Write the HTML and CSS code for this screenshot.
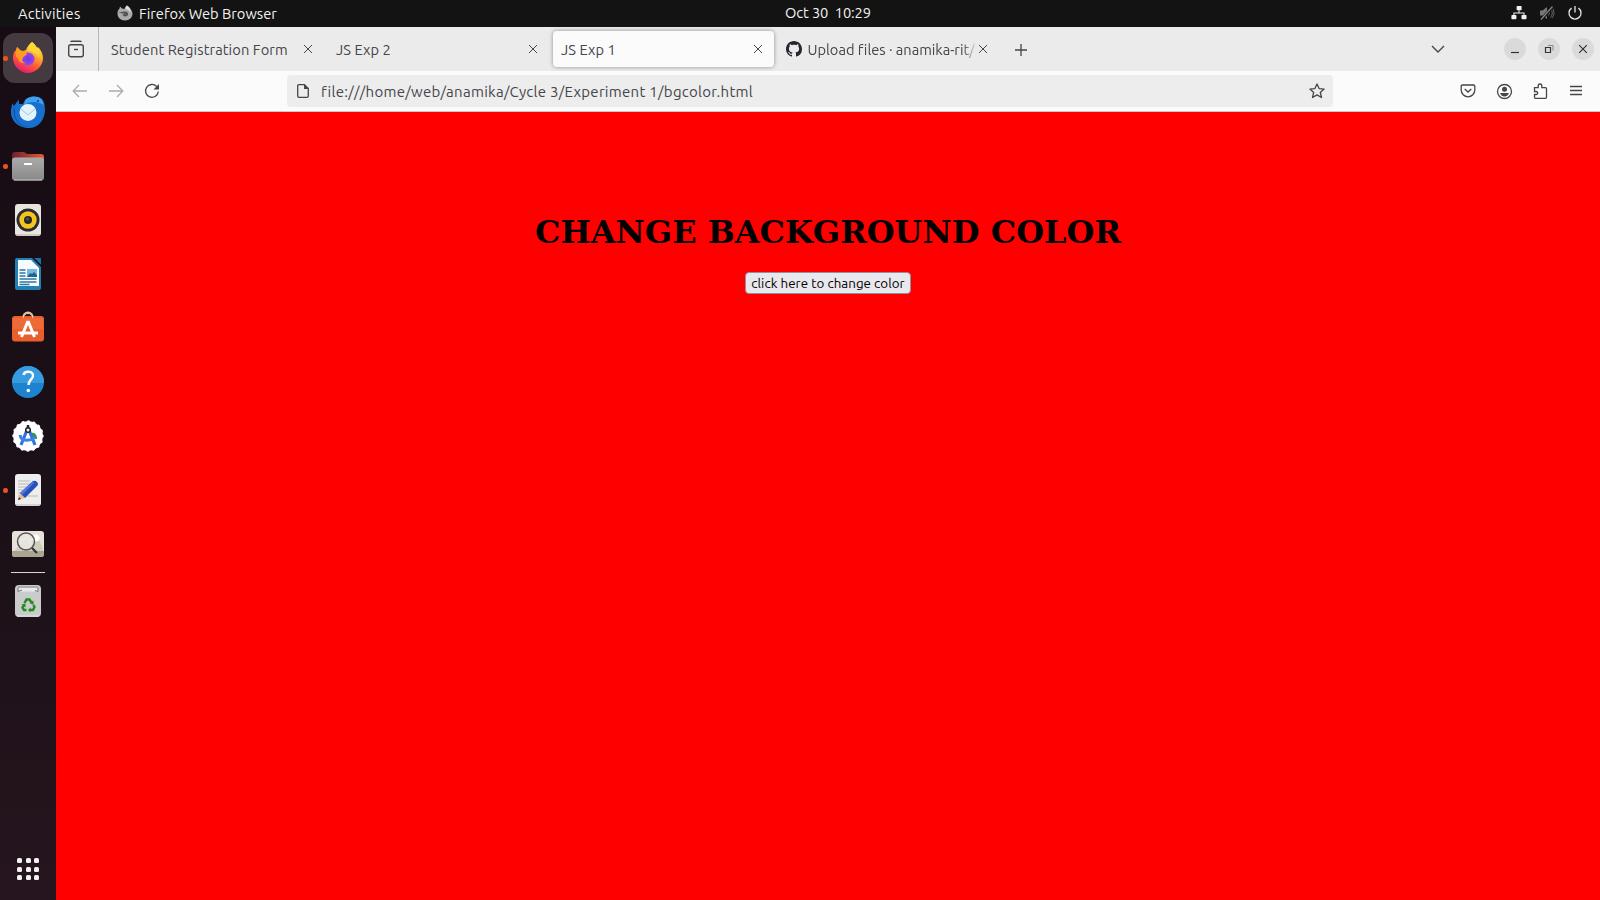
FILE: index.html
```html
<!DOCTYPE html>
<html lang="en">
<head>
<meta charset="utf-8">
<title>JS Exp 1</title>
<link rel="stylesheet" href="styles.css">
</head>
<body>
<header class="topbar">
  <span class="activities">Activities</span>
  <svg class="app-icon" width="16" height="16" viewBox="0 0 32 32"><path fill="#aaa" d="M20 1c6 4 10 9 11 16 0 8-6 14-15 14S1 25 1 17c0-4 1-7 4-10l1-4 4 4 5 1c1-3 2-5 5-7z"/><path fill="#555" d="M3 14c5 1 9-1 13-1 5 0 7 3 6 7-2 4-9 4-12-1 2 1 4 0 4-2-4 0-7-1-11-3z"/><path fill="#ddd" d="M20 1c5 4 8 8 7 15-2-5-5-7-10-8 0-3 1-5 3-7z"/></svg>
  <span class="app-name">Firefox Web Browser</span>
  <span class="clock">Oct 30&nbsp; 10:29</span>
  <div class="status">
    <svg width="16" height="16" viewBox="0 0 16 16" fill="#f2f2f2"><rect x="5.6" y="1" width="5" height="4.3" rx=".7"/><rect x=".4" y="10" width="5" height="4.3" rx=".7"/><rect x="10.5" y="10" width="5" height="4.3" rx=".7"/><path d="M7.500 5h1v2.500h5V10h-1V8.500H3.400V10h-1V7.500h5.100z"/></svg>
    <svg width="16" height="16" viewBox="0 0 16 16"><path fill="#777" d="M1 5.500h2.500L8 2v12L3.500 10.500H1z"/><path d="M9.500 5.500q2 2.500 0 5M11.500 3.500q3.500 4.500 0 9M13 2q4 6 0 11" fill="none" stroke="#666"/><path d="M1.500 15.500 14 1.500" stroke="#131313" stroke-width="3"/><path d="M2 14.500 13.500 1.500" stroke="#888" stroke-width="1.200"/></svg>
    <svg width="16" height="16" viewBox="0 0 16 16" fill="none" stroke="#e8e8e8" stroke-width="1.300"><path d="M4.600 3.100a6 6 0 1 0 6.800 0M8 1v6.500"/></svg>
  </div>
</header>
<div class="desktop">
  <nav class="dock">
    <div class="launcher active running"><svg width="36" height="36" viewBox="0 0 36 36"><defs><linearGradient id="fx" x1=".8" y1="0" x2=".3" y2="1"><stop offset="0" stop-color="#fff14a"/><stop offset=".35" stop-color="#ffb32c"/><stop offset=".65" stop-color="#ff5a36"/><stop offset="1" stop-color="#e31578"/></linearGradient><radialGradient id="fxp"><stop offset="0" stop-color="#6a3be0"/><stop offset="1" stop-color="#9a45ec"/></radialGradient></defs><path fill="url(#fx)" d="M22 2c2 1.500 4 4 5 6l1-1c3 3 5 7 5 11 0 8-7 15-15 15S3 26 3 18c0-4 1-6 3-8l1-3 3 3 3 1 3-1c1-3 3-6 6-8z"/><circle cx="18" cy="19" r="6.500" fill="url(#fxp)"/><path fill="#ff9a22" d="M6 12l1-5 4 4 3 0 3 3c-1 2-4 2-4 4-2 2 0 5 3 5-5 1-8-2-8-5l-2-1z"/><path fill="#ffd836" d="M22 2c5 4 8 9 7 16-1-3-2-5-5-5-2-2-4-2-6-2 0-4 1-6 4-9z"/></svg></div>
    <div class="launcher"><svg width="36" height="36" viewBox="0 0 36 36"><path fill="#1670cc" d="M2 11q0-3 2 1l5-7v5h4C15 4 22 1 29 3c5 2 6 7 6 14C34 27 28 34 19 34 9 34 0 27 1 16z"/><path fill="#180d15" d="M8 2h7l-2 7H9z"/><path fill="#3fa0ef" d="M15 6c4-4 12-5 17 0l2 5c-7-4-14-4-20 0z"/><path fill="#0c51ab" d="M5 17c-1 8 5 15 14 16C9 33 2 25 4 12z"/><circle cx="18" cy="18.500" r="8.500" fill="#e4f2fc"/><path d="m11 15 7 6 7-6" fill="none" stroke="#a5c4dd"/><circle cx="28" cy="7" r="1" fill="#123b79"/></svg></div>
    <div class="launcher running low"><svg width="36" height="36" viewBox="0 0 36 36"><defs><linearGradient id="fd"><stop stop-color="#6d2034"/><stop offset="1" stop-color="#e25c31"/></linearGradient><linearGradient id="fg" x2="0" y2="1"><stop stop-color="#aaa"/><stop offset="1" stop-color="#898989"/></linearGradient></defs><path fill="url(#fd)" d="M2 6q0-3 3-3h9l3 2h14q3 0 3 3v9H2z"/><rect x="2" y="8.500" width="32" height="23" rx="3" fill="url(#fg)"/><path d="M4 31h28" stroke="#c5c5c5"/><rect x="14" y="14" width="8" height="2" rx=".5" fill="#fff"/></svg></div>
    <div class="launcher"><svg width="36" height="36" viewBox="0 0 36 36"><rect x="5" y="2" width="26" height="32" rx="3" fill="#e9e4de"/><path d="M6 33h24" stroke="#b7aea4"/><circle cx="18" cy="18" r="11.500" fill="#272b32"/><circle cx="18" cy="18" r="8.700" fill="#f5c51d"/><circle cx="18" cy="18" r="4" fill="#25292e"/><circle cx="17.500" cy="17" r="1.500" fill="#555"/></svg></div>
    <div class="launcher"><svg width="36" height="36" viewBox="0 0 36 36"><path fill="#2380b5" d="M7 2h16l8 8v22q0 2-2 2H7q-2 0-2-2V4q0-2 2-2z"/><path fill="#f8fbfd" d="M8 4h13l8 8v18H8z"/><path fill="#1571a8" d="M24 2h7v7z"/><path fill="#180d15" d="m22 2 9 9V9l-7-7z"/><path d="M9.500 14h6M9.500 17h6M9.500 20h6M9.500 23h17M9.500 26h17M9.500 28.500h10" stroke="#2a78a6" stroke-width="1.300"/><path fill="#75b8dd" d="M17 13h10v8H17z"/><path fill="#1b668f" d="m17 21 3-4 2 1 2-2 3 3v2z"/></svg></div>
    <div class="launcher high"><svg width="36" height="36" viewBox="0 0 36 36"><path d="M13 10C12 1 24 1 23 10" fill="none" stroke="#e7c4a8" stroke-width="1.600"/><path fill="#e85e2c" d="M5 7h26q3 0 3 3v19.500q0 3-3 3H5q-3 0-3-3V10q0-3 3-3z"/><path fill="#f17744" d="M3 9h30v11H3z" opacity=".5"/><path d="m18 12-6.500 16M18 12l6.500 16" fill="none" stroke="#fff" stroke-width="3"/><path d="M8 24h20" stroke="#fff" stroke-width="3"/><path d="M13 9C14 3 22 3 23 9" fill="none" stroke="#f7dbc5"/></svg></div>
    <div class="launcher"><svg width="36" height="36" viewBox="0 0 36 36"><circle cx="18" cy="18" r="16" fill="#1d83d0"/><path d="M2 18a16 16 0 0 1 32 0v1H2z" fill="#379be0"/><path d="M13.500 11c1-4.500 10-4.500 9.500 1 0 3-4.500 3.500-4.500 9" fill="none" stroke="#fff" stroke-width="2.400"/><circle cx="18.300" cy="26.500" r="1.800" fill="#fff"/></svg></div>
    <div class="launcher"><svg width="36" height="36" viewBox="0 0 36 36"><circle cx="18" cy="18" r="14.800" fill="#fff"/><circle cx="18" cy="18" r="14" fill="none" stroke="#fff" stroke-width="3.500" stroke-linecap="round" stroke-dasharray=".1 5.398"/><path fill="#329650" d="M21 15c4-1 6 2 6 6h-6z"/><path d="m17 12-6 15M19 12l6 15" stroke="#3273dc" stroke-width="3.200"/><path d="M10 17q1 6 8 5 5 0 7-3" fill="none" stroke="#3d83ea" stroke-width="3"/><circle cx="18" cy="12" r="2.300" fill="#eee" stroke="#222" stroke-width="1.500"/><path d="M18 7v3" stroke="#222" stroke-width="2.500"/></svg></div>
    <div class="launcher running"><svg width="36" height="36" viewBox="0 0 36 36"><rect x="5" y="2" width="26" height="32" rx="3" fill="#eee"/><path d="M6 33h24" stroke="#bbb"/><path d="M8 9h12M8 12h15M8 15h12M8 18h10M8 21h8M8 24h20" stroke="#bcb8ae" stroke-width="1.200"/><path fill="#edbd83" d="m8 28 2-7 5 5z"/><path fill="#284fba" d="M10 21 23 9q2-1 4 1 2 2 0 4L15 26z"/><path fill="#4d7be0" d="m10 21 13-12 1 2-12 12z"/><path fill="#333" d="m8 28 1-3 2 2z"/></svg></div>
    <div class="launcher"><svg width="36" height="36" viewBox="0 0 36 36"><rect x="2" y="5" width="32" height="26" rx="3" fill="#e5e2d8"/><path fill="#d0cdbf" d="m3 26 13-13 4 7 8-8 5 10v7q0 2-2 2H5q-2 0-2-2z"/><path fill="#aaa58f" d="M2 25h32v3q0 3-3 3H5q-3 0-3-3z"/><circle cx="26" cy="12" r="3.500" fill="#fff"/><circle cx="16" cy="15.500" r="8.500" fill="#ebe9e4" fill-opacity=".8" stroke="#555" stroke-width="1.500"/><path d="m22 22 5 5" stroke="#333" stroke-width="2.200"/></svg></div>
    <div class="separator"></div>
    <div class="launcher high"><svg width="36" height="36" viewBox="0 0 36 36"><rect x="5" y="2" width="26" height="32" rx="4" fill="#c9cccb"/><path fill="#e8e8e8" d="M8 3.500h20v5H8z"/><path d="M8 4h20M8 4.500v4l4-1.500M28 4.500v4l-3-1" fill="none" stroke="#777"/><path d="M7 33h22" stroke="#e2e2e2"/><g fill="none" stroke="#228b22" stroke-width="2.400"><path d="m14.500 20 2-3.500h3l2 3M23.500 22l1 2-1.500 3h-3M16.500 27H14l-1.500-2.500 1.500-2.500"/></g><path fill="#228b22" d="m19.500 20 4-2.500v4.500zM20.500 24.500v5L18 27zM11.500 21.500l4-1v4z"/></svg></div>
    <div class="apps-grid"><i></i><i></i><i></i><i></i><i></i><i></i><i></i><i></i><i></i></div>
  </nav>
  <main class="browser">
    <div class="tabstrip">
      <div class="firefox-view"><svg width="18" height="18" viewBox="0 0 18 18" fill="none" stroke="#45454a" stroke-width="1.400"><path d="M3.500 1.700q.5-.5 1.500-.500h8q1 0 1.500.500"/><rect x="1.700" y="4.700" width="14.600" height="12" rx="2"/><path d="M7 9.500h4"/></svg></div>
      <div class="tab"><span class="tab-title t-reg">Student Registration Form</span><svg class="close" width="10" height="10"><path d="m1 1 8 8M9 1 1 9"/></svg></div>
      <div class="tab"><span class="tab-title t-exp">JS Exp 2</span><svg class="close" width="10" height="10"><path d="m1 1 8 8M9 1 1 9"/></svg></div>
      <div class="tab selected"><span class="tab-title t-exp">JS Exp 1</span><svg class="close" width="10" height="10"><path d="m1 1 8 8M9 1 1 9"/></svg></div>
      <div class="tab"><svg class="favicon" width="16" height="16" viewBox="0 0 16 16"><path fill="#24292f" d="M8 0C3.580 0 0 3.580 0 8c0 3.540 2.290 6.530 5.470 7.590.4.070.55-.17.55-.38 0-.19-.01-.82-.01-1.490-2.010.37-2.530-.49-2.690-.94-.09-.23-.48-.94-.82-1.130-.28-.15-.68-.52-.01-.53.63-.01 1.080.58 1.230.82.72 1.210 1.870.87 2.330.66.070-.52.28-.87.51-1.070-1.780-.2-3.640-.89-3.640-3.950 0-.87.31-1.590.82-2.150-.08-.2-.36-1.020.08-2.120 0 0 .67-.21 2.200.82.64-.18 1.320-.27 2-.27s1.360.09 2 .27c1.530-1.040 2.200-.82 2.200-.82.44 1.100.16 1.920.08 2.120.51.56.82 1.270.82 2.150 0 3.070-1.870 3.750-3.650 3.950.29.25.54.73.54 1.480 0 1.070-.01 1.930-.01 2.200 0 .21.15.46.55.38A8.010 8.010 0 0 0 16 8c0-4.420-3.580-8-8-8z"/></svg><span class="tab-title t-up">Upload files · anamika-rit/</span><svg class="close" width="10" height="10"><path d="m1 1 8 8M9 1 1 9"/></svg></div>
      <svg class="new-tab" width="14" height="14" stroke="#45454a" stroke-width="1.300"><path d="M7 1v12M1 7h12"/></svg>
      <svg class="all-tabs" width="14" height="8" fill="none" stroke="#45454a" stroke-width="1.400"><path d="m1 1 6 6 6-6"/></svg>
      <div class="window-buttons">
        <button><svg width="10" height="10"><path d="M1 8.500h8"/></svg></button>
        <button><svg width="10" height="10"><path d="M1.500 3.500h5v5h-5z"/><path d="M4 1.500h5v5" stroke="#888" stroke-width="1"/></svg></button>
        <button><svg width="10" height="10"><path d="m1.200 1.200 7.600 7.600M8.800 1.200 1.200 8.800"/></svg></button>
      </div>
    </div>
    <div class="toolbar">
      <svg class="off" width="16" height="16"><path d="M15 8H1.500M7 2 1.200 8 7 14"/></svg>
      <svg class="off" width="16" height="16"><path d="M1 8h13.500M9 2l5.800 6L9 14"/></svg>
      <svg width="16" height="16"><path d="M14.300 8.500A6.400 6.400 0 1 1 12.600 3.500"/><path d="M15 1v5.500H9.500z" fill="#45454a" stroke="none"/></svg>
      <div class="urlbar">
        <svg width="16" height="16"><path d="M4 1.700h5.500l3.800 3.800v7.500q0 1.300-1.300 1.300H4q-1.300 0-1.300-1.300V3q0-1.300 1.300-1.300z"/><path d="M9 1.500V6h4.500z" fill="#45454a" stroke="none"/></svg>
        <span class="url">file:///home/web/anamika/Cycle 3/Experiment 1/bgcolor.html</span>
        <svg class="star" width="16" height="16"><path stroke-linejoin="round" d="m8 1 2.100 4.600 5 .5-3.800 3.400 1.200 5L8 11.900l-4.500 2.600 1.200-5L.9 6.100l5-.5z"/></svg>
      </div>
      <div class="actions">
        <svg width="16" height="16"><path d="M2.500 2h11q1.300 0 1.300 1.300V7A6.800 6.800 0 0 1 1.200 7V3.300Q1.200 2 2.500 2z"/><path d="m4.700 6 3.300 3 3.300-3"/></svg>
        <svg width="16" height="16"><circle cx="8.500" cy="8.500" r="7"/><circle cx="8.500" cy="6.300" r="2.500" fill="#45454a" stroke="none"/><path d="M4 10h9q-1.500 3.500-4.500 3.500T4 10z" fill="#45454a" stroke="none"/></svg>
        <svg width="16" height="16"><path d="M2.500 4.700h3.700V3q0-2 1.800-2t1.800 2v1.700h3.700q1 0 1 1v8.600q0 1-1 1h-10q-1 0-1-1V11.500H4q1.700 0 1.700-1.500T4 8.500H2.500z"/></svg>
        <svg width="16" height="16"><path d="M2 3.500h12M2 7.500h12M2 11.500h12"/></svg>
      </div>
    </div>
    <section class="page">
      <h1>CHANGE BACKGROUND COLOR</h1>
      <button class="change"><span>click here to change color</span></button>
    </section>
  </main>
</div>
</body>
</html>
```
FILE: styles.css
```css
* { box-sizing: border-box; }
body { margin: 0; width: 1600px; height: 900px; overflow: hidden; font: 14.667px "Ubuntu", "Noto Sans", sans-serif; color: #45454a; }
svg { flex: none; display: block; }
button { font-family: inherit; padding: 0; }
span { white-space: nowrap; }

.topbar { height: 27px; background: #131313; color: #f2f2f2; display: flex; align-items: center; position: relative; padding-left: 18px; }
.activities { width: 99px; letter-spacing: .24px; }
.app-icon { margin-top: -2px; margin-right: 6px; }
.clock { position: absolute; left: 785px; top: 0; line-height: 26px; letter-spacing: -.1px; }
.status { display: flex; gap: 12px; margin-left: auto; padding-right: 17px; margin-top: -2px; }

.desktop { display: flex; height: 873px; }
.dock { width: 56px; background: linear-gradient(#180c14, #1b1017 55%, #26151e); display: flex; flex-direction: column; align-items: center; padding: 4px 0 20px; }
.launcher { width: 56px; height: 54px; flex: none; display: flex; align-items: center; justify-content: center; position: relative; }
.launcher svg { position: relative; }
.low svg { margin-top: 1px; }
.high svg { margin-top: -2px; }
.launcher.active::after { content: ""; position: absolute; left: 3px; top: 2px; width: 50px; height: 50px; border-radius: 12px; background: #443a40; }
.launcher.active svg { z-index: 1; }
.launcher.running::before { content: ""; position: absolute; z-index: 2; left: 3px; top: 25px; width: 4.500px; height: 4.500px; border-radius: 50%; background: #e95420; }
.separator { width: 34px; height: 1px; background: #d8d5d7; margin: 1px 0 2px; flex: none; }
.apps-grid { margin-top: auto; display: grid; grid-template-columns: repeat(3, 5px); gap: 3.500px; }
.apps-grid i { width: 5px; height: 5px; border-radius: 1.500px; background: #f4f2f3; }

.browser { flex: 1; display: flex; flex-direction: column; }
.tabstrip { height: 44px; background: #ebebeb; display: flex; align-items: center; }
.firefox-view { width: 43px; height: 44px; border-right: 1px solid #b8b8b8; padding: 13px 0 0 11px; }
.tab { width: 221px; height: 36px; margin: 0 2px; border-radius: 4px; display: flex; align-items: center; padding: 0 11px 0 8px; }
.firefox-view + .tab { margin-left: 4px; }
.tab.selected { background: #fbfbfb; box-shadow: 0 0 4px rgba(0,0,0,.4); }
.tab-title { letter-spacing: .09px; }
.close { margin-left: auto; stroke: #45454a; stroke-width: 1; }
.favicon { margin-right: 5.500px; }
.t-up { width: 168px; letter-spacing: -.03px; mask-image: linear-gradient(90deg, #000 92%, transparent 101%); }
.new-tab { margin-left: 13px; margin-top: 1px; }
.all-tabs { margin-left: auto; margin-right: 59px; }
.window-buttons { display: flex; gap: 12px; margin-right: 6px; }
.window-buttons button { width: 22px; height: 22px; border: 0; border-radius: 50%; background: #dadada; display: grid; place-items: center; }
.window-buttons svg { fill: none; stroke: #333; stroke-width: 1.200; }

.toolbar { height: 41px; background: #fbfbfb; border-bottom: 1px solid #c8c8c8; display: flex; align-items: center; padding-left: 16px; gap: 20px; }
.toolbar svg { fill: none; stroke: #45454a; stroke-width: 1.300; overflow: visible; }
.toolbar .off { stroke: #acacae; }
.urlbar { width: 1046px; height: 32px; background: #ededed; border-radius: 4px; margin-left: 107px; padding: 0 8px; display: flex; align-items: center; }
.url { margin-left: 10px; padding-top: 1px; font-size: 15px; letter-spacing: .275px; }
.star { margin-left: auto; }
.actions { margin-left: auto; display: flex; gap: 20px; padding-right: 16px; }

.page { flex: 1; background: #f00; display: flex; flex-direction: column; align-items: center; padding-top: 102px; }
h1 { margin: 0; color: #000; font: bold 32px/37px "DejaVu Serif", serif; white-space: nowrap; }
.change { margin-top: 21px; width: 166px; height: 22px; border: 1px solid #8f8f9d; border-radius: 4px; background: #e9e9ed; color: #000; font-size: 13.333px; line-height: 18px; letter-spacing: .05px; display: flex; align-items: center; justify-content: center; padding-top: 2px; }
```
